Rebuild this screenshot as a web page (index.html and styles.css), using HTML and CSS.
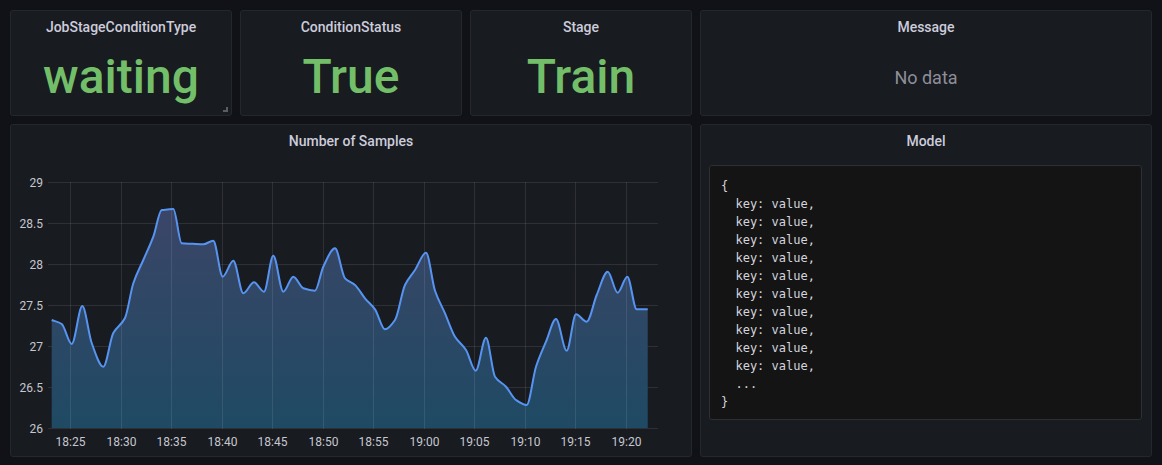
FILE: index.html
```html
<!DOCTYPE html>
<html>
<head>
<meta charset="utf-8">
<link rel="stylesheet" href="styles.css">
</head>
<body>
<div class="dashboard">
  <section class="panel">
    <header class="panel-title">JobStageConditionType</header>
    <div class="stat-body"><span class="stat-value">waiting</span></div>
    <span class="resize-handle"></span>
  </section>
  <section class="panel">
    <header class="panel-title">ConditionStatus</header>
    <div class="stat-body"><span class="stat-value">True</span></div>
  </section>
  <section class="panel">
    <header class="panel-title">Stage</header>
    <div class="stat-body"><span class="stat-value">Train</span></div>
  </section>
  <section class="panel">
    <header class="panel-title">Message</header>
    <div class="stat-body"><span class="no-data">No data</span></div>
  </section>

  <section class="panel panel-chart">
    <header class="panel-title">Number of Samples</header>
    <svg class="chart" width="680" height="301" viewBox="11 155 680 301">
      <defs>
        <linearGradient id="fillGrad" gradientUnits="userSpaceOnUse" x1="0" y1="200" x2="0" y2="428">
          <stop offset="0" stop-color="#3c4567"/>
          <stop offset="1" stop-color="#1f4a64"/>
        </linearGradient>
      </defs>
      <g class="grid">
        <line x1="48" y1="182.5" x2="658" y2="182.5"/>
        <line x1="48" y1="223.5" x2="658" y2="223.5"/>
        <line x1="48" y1="264.5" x2="658" y2="264.5"/>
        <line x1="48" y1="305.5" x2="658" y2="305.5"/>
        <line x1="48" y1="346.5" x2="658" y2="346.5"/>
        <line x1="48" y1="387.5" x2="658" y2="387.5"/>
        <line x1="48" y1="428.5" x2="658" y2="428.5"/>
      </g>
      <path id="area" class="area" d=""/>
      <g class="grid grid-v">
        <line x1="70.5" y1="182" x2="70.5" y2="429"/>
        <line x1="121.5" y1="182" x2="121.5" y2="429"/>
        <line x1="171.5" y1="182" x2="171.5" y2="429"/>
        <line x1="222.5" y1="182" x2="222.5" y2="429"/>
        <line x1="272.5" y1="182" x2="272.5" y2="429"/>
        <line x1="323.5" y1="182" x2="323.5" y2="429"/>
        <line x1="373.5" y1="182" x2="373.5" y2="429"/>
        <line x1="424.5" y1="182" x2="424.5" y2="429"/>
        <line x1="474.5" y1="182" x2="474.5" y2="429"/>
        <line x1="525.5" y1="182" x2="525.5" y2="429"/>
        <line x1="575.5" y1="182" x2="575.5" y2="429"/>
        <line x1="626.5" y1="182" x2="626.5" y2="429"/>
      </g>
      <path id="line" class="line" d=""/>
      <g class="axis-y">
        <text x="43" y="186.5">29</text>
        <text x="43" y="227.5">28.5</text>
        <text x="43" y="268.5">28</text>
        <text x="43" y="309.5">27.5</text>
        <text x="43" y="350.5">27</text>
        <text x="43" y="391.5">26.5</text>
        <text x="43" y="432.5">26</text>
      </g>
      <g class="axis-x">
        <text x="70.5" y="446">18:25</text>
        <text x="121.5" y="446">18:30</text>
        <text x="171.5" y="446">18:35</text>
        <text x="222.5" y="446">18:40</text>
        <text x="272.5" y="446">18:45</text>
        <text x="323.5" y="446">18:50</text>
        <text x="373.5" y="446">18:55</text>
        <text x="424.5" y="446">19:00</text>
        <text x="474.5" y="446">19:05</text>
        <text x="525.5" y="446">19:10</text>
        <text x="575.5" y="446">19:15</text>
        <text x="626.5" y="446">19:20</text>
      </g>
    </svg>
  </section>

  <section class="panel panel-model">
    <header class="panel-title">Model</header>
    <div class="model-body">
<pre class="code">{
  key: value,
  key: value,
  key: value,
  key: value,
  key: value,
  key: value,
  key: value,
  key: value,
  key: value,
  key: value,
  ...
}</pre>
    </div>
  </section>
</div>
<script src="script.js"></script>
</body>
</html>
```

FILE: styles.css
```css
* { box-sizing: border-box; }

html, body {
  margin: 0;
  padding: 0;
  background: #111217;
}

body {
  font-family: Roboto, "Liberation Sans", sans-serif;
  color: #ccccdc;
}

.dashboard {
  display: grid;
  grid-template-columns: 222px 222px 222px 452px;
  grid-template-rows: 106px 333px;
  gap: 8px;
  padding: 10px;
}

.panel {
  position: relative;
  display: flex;
  flex-direction: column;
  background: #181b1f;
  border: 1px solid #24272d;
  border-radius: 3px;
  overflow: hidden;
}

.panel-title {
  height: 30px;
  flex: 0 0 30px;
  display: flex;
  align-items: center;
  justify-content: center;
  font-size: 14px;
  font-weight: 500;
  color: #ccccdc;
  padding-top: 1px;
}

.stat-body {
  flex: 1;
  display: flex;
  align-items: center;
  justify-content: center;
  padding-bottom: 2px;
}

.stat-value {
  font-size: 48px;
  font-weight: 500;
  color: #73bf69;
  line-height: 1;
}

.no-data {
  font-size: 18px;
  color: #8e8e9a;
}

.resize-handle {
  position: absolute;
  right: 3px;
  bottom: 3px;
  width: 5px;
  height: 5px;
  border-right: 2px solid #5a5d63;
  border-bottom: 2px solid #5a5d63;
}

.panel-chart {
  grid-column: 1 / 4;
}

.chart {
  display: block;
}

.grid line {
  stroke: rgba(204, 204, 220, 0.12);
  stroke-width: 1;
}

.area {
  fill: url(#fillGrad);
}

.line {
  fill: none;
  stroke: #5794f2;
  stroke-width: 2;
  stroke-linejoin: round;
}

.axis-y text,
.axis-x text {
  font-family: Roboto, "Liberation Sans", sans-serif;
  font-size: 12px;
  fill: #c7c7d1;
}

.axis-y text { text-anchor: end; }
.axis-x text { text-anchor: middle; }

.model-body {
  padding: 10px 9px 0 8px;
}

.code {
  margin: 0;
  background: #141414;
  border: 1px solid #2c2f35;
  border-radius: 3px;
  padding: 11px 11px 8px 11px;
  font-family: "DejaVu Sans Mono", "Liberation Mono", monospace;
  font-size: 12px;
  line-height: 18px;
  color: #d4d4de;
}
```

FILE: script.js
```js
(function () {
  var pts = [[51.7,320],[61.7,324],[71.7,344],[82.3,306],[91.7,343],[103.3,366.7],[113.3,333],[125,318],[133.3,283.3],[143.3,260],[153.3,236.7],[161.7,210],[167.5,209.5],[173.3,209],[181.7,243.3],[192.5,243.8],[203.3,244.3],[213.3,240.7],[222.7,276.7],[233.3,260.7],[243.3,293.3],[254,282.3],[264,291.7],[273.3,255.7],[283.3,291.7],[293.3,276.7],[303.3,288.3],[315,290.7],[323.3,266.7],[335,248.3],[345,278.3],[355,285],[365,298.3],[375,309.3],[385,329.3],[395,320],[405,285],[415,270],[426,252.7],[435,290.7],[445,313.3],[455,336.7],[466,350],[475.7,370.7],[486,337.7],[495,376.7],[506,386.7],[516,400],[526.7,405],[536,366.7],[546,341.7],[556,319],[566.7,350.7],[576,314.3],[586.7,321.7],[596.7,295],[607.7,271.7],[617.7,292.7],[627.3,276.7],[636.7,309.3],[647.7,309.3]];
  var n = pts.length;
  var dx = [], dy = [], m = [], tg = [];
  for (var i = 0; i < n - 1; i++) {
    dx[i] = pts[i + 1][0] - pts[i][0];
    dy[i] = pts[i + 1][1] - pts[i][1];
    m[i] = dy[i] / dx[i];
  }
  tg[0] = m[0];
  tg[n - 1] = m[n - 2];
  for (i = 1; i < n - 1; i++) {
    if (m[i - 1] * m[i] <= 0) {
      tg[i] = 0;
    } else {
      var w1 = 2 * dx[i] + dx[i - 1];
      var w2 = dx[i] + 2 * dx[i - 1];
      tg[i] = (w1 + w2) / (w1 / m[i - 1] + w2 / m[i]);
    }
  }
  var d = 'M' + pts[0][0] + ',' + pts[0][1];
  for (i = 0; i < n - 1; i++) {
    var h = dx[i] / 3;
    var c1x = pts[i][0] + h, c1y = pts[i][1] + tg[i] * h;
    var c2x = pts[i + 1][0] - h, c2y = pts[i + 1][1] - tg[i + 1] * h;
    d += ' C' + c1x.toFixed(2) + ',' + c1y.toFixed(2) + ' ' + c2x.toFixed(2) + ',' + c2y.toFixed(2) + ' ' + pts[i + 1][0] + ',' + pts[i + 1][1];
  }
  document.getElementById('line').setAttribute('d', d);
  var last = pts[n - 1];
  document.getElementById('area').setAttribute('d', d + ' L' + last[0] + ',428 L' + pts[0][0] + ',428 Z');
})();
```
